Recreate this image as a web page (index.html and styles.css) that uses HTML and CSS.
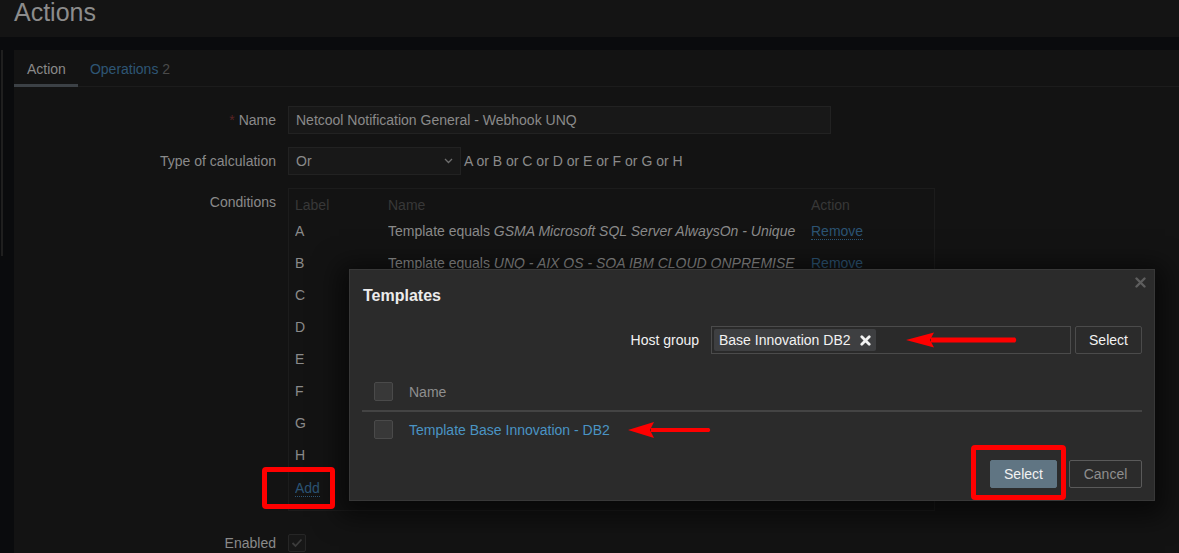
FILE: index.html
```html
<!DOCTYPE html>
<html>
<head>
<meta charset="utf-8">
<title>Actions</title>
<link rel="stylesheet" href="styles.css">
</head>
<body>
<div class="page">
  <header class="page-head"><h1 class="title">Actions</h1></header>
  <div class="band"></div>
  <div class="main">
    <aside class="gutter"><div class="gutter-line"></div></aside>
    <section class="panel">
      <nav class="tabs">
        <a class="tab active">Action</a>
        <a class="tab link">Operations <span class="count">2</span></a>
      </nav>
      <div class="form">
        <label class="f-label"><span class="req">*</span> Name</label>
        <div class="f-field"><div class="input name-input">Netcool Notification General - Webhook UNQ</div></div>

        <label class="f-label">Type of calculation</label>
        <div class="f-field inline">
          <div class="input select">Or
            <svg class="chev" width="9" height="6" viewBox="0 0 9 6"><path d="M1 1 L4.5 4.5 L8 1" fill="none" stroke="#6e6e6e" stroke-width="1.3"/></svg>
          </div>
          <span class="calc">A or B or C or D or E or F or G or H</span>
        </div>

        <label class="f-label">Conditions</label>
        <div class="f-field">
          <div class="cond-box">
            <table class="cond">
              <colgroup><col class="c-label"><col class="c-name"><col class="c-act"></colgroup>
              <thead><tr><th>Label</th><th>Name</th><th>Action</th></tr></thead>
              <tbody>
                <tr><td>A</td><td>Template equals <em>GSMA Microsoft SQL Server AlwaysOn - Unique</em></td><td><a class="dlink">Remove</a></td></tr>
                <tr><td>B</td><td>Template equals <em>UNQ - AIX OS - SOA IBM CLOUD ONPREMISE</em></td><td><a class="dlink">Remove</a></td></tr>
                <tr><td>C</td><td></td><td></td></tr>
                <tr><td>D</td><td></td><td></td></tr>
                <tr><td>E</td><td></td><td></td></tr>
                <tr><td>F</td><td></td><td></td></tr>
                <tr><td>G</td><td></td><td></td></tr>
                <tr><td>H</td><td></td><td></td></tr>
                <tr><td><a class="dlink">Add</a></td><td></td><td></td></tr>
              </tbody>
            </table>
          </div>
        </div>

        <label class="f-label enabled-label">Enabled</label>
        <div class="f-field enabled-field">
          <span class="chk-dim"><svg width="12" height="10" viewBox="0 0 12 10"><path d="M1.5 5 L4.5 8 L10.5 1.5" fill="none" stroke="#3c3c3c" stroke-width="1.8"/></svg></span>
        </div>
      </div>
    </section>
  </div>
</div>

<div class="modal">
  <div class="modal-head"><h2 class="modal-title">Templates</h2></div>
  <svg class="close" width="11" height="11" viewBox="0 0 11 11"><path d="M1.5 1.5 L9.5 9.5 M9.5 1.5 L1.5 9.5" stroke="#5e5e5e" stroke-width="2.4" stroke-linecap="round"/></svg>
  <div class="modal-body">
    <div class="hg-row">
      <span class="hg-label">Host group</span>
      <div class="multi">
        <span class="chip">Base Innovation DB2
          <svg class="chip-x" width="11" height="11" viewBox="0 0 11 11"><path d="M1.8 1.8 L9.2 9.2 M9.2 1.8 L1.8 9.2" stroke="#f2f2f2" stroke-width="2.8" stroke-linecap="round"/></svg>
        </span>
      </div>
      <button class="btn-alt">Select</button>
    </div>
    <table class="list">
      <thead><tr><th class="cb-cell"><span class="chk"></span></th><th>Name</th></tr></thead>
      <tbody><tr><td class="cb-cell"><span class="chk"></span></td><td><a class="link-blue">Template Base Innovation - DB2</a></td></tr></tbody>
    </table>
    <div class="modal-foot">
      <button class="btn-main">Select</button>
      <button class="btn-cancel">Cancel</button>
    </div>
  </div>
</div>

<div class="mark mark-add"></div>
<div class="mark mark-select"></div>
<svg class="arrow arrow-hg" width="114" height="18" viewBox="0 0 114 18"><path d="M26 6.5 L110 6.5 Q112.5 9 110 11.5 L26 11.5 Z" fill="#f00"/><path d="M1 9 L29 1.5 L25 9 L29 16.5 Z" fill="#f00"/></svg>
<svg class="arrow arrow-tpl" width="86" height="18" viewBox="0 0 86 18"><path d="M24 7 L82 7 Q84.5 9 82 11 L24 11 Z" fill="#f00"/><path d="M1 9 L27 1 L23 9 L27 17 Z" fill="#f00"/></svg>
</body>
</html>
```

FILE: styles.css
```css
* { box-sizing: border-box; }
html, body { margin: 0; }
body {
  width: 1179px;
  height: 553px;
  overflow: hidden;
  position: relative;
  background: #131313;
  font-family: "Liberation Sans", Arial, sans-serif;
  font-size: 14px;
  color: #8a8a8a;
}
.page { display: flex; flex-direction: column; height: 553px; }
.page-head { height: 37px; background: #141414; flex: none; }
.title {
  margin: 0;
  padding-left: 14px;
  font-size: 25px;
  font-weight: normal;
  line-height: 25px;
  color: #8c8c8c;
}
.band { height: 13px; background: #0a0b0d; flex: none; }
.main { flex: 1; display: flex; }
.gutter { width: 14px; flex: none; background: #0a0b0d; }
.gutter-line { margin-left: 1px; width: 2px; height: 206px; background: #1f1f1f; }
.panel { flex: 1; background: #131313; }

.tabs { display: flex; height: 37px; border-bottom: 1px solid #1c1c1c; }
.tab { display: block; height: 37px; line-height: 36px; padding: 1px 12px 0; }
.tab.active { padding-left: 13px; color: #8a8a8a; box-shadow: inset 0 -3px 0 #3c4146; }
.tab.link { color: #2e5675; }
.tab .count { color: #4a4a4a; }

.form {
  display: grid;
  grid-template-columns: 262px 1fr;
  column-gap: 12px;
  row-gap: 13px;
  padding-top: 19px;
}
.f-label { text-align: right; line-height: 28px; color: #8a8a8a; }
.req { color: #5a2424; }
.f-field { display: flex; align-items: flex-start; }
.f-field.inline { align-items: center; }
.input {
  height: 28px;
  line-height: 26px;
  padding: 0 7px;
  background: #181818;
  border: 1px solid #222222;
  color: #8a8a8a;
}
.name-input { width: 543px; }
.select { width: 173px; position: relative; display: flex; justify-content: space-between; align-items: center; padding-right: 7px; }
.chev { display: block; }
.calc { margin-left: 3px; color: #8a8a8a; }

.cond-box { width: 647px; border: 1px solid #1c1c1c; padding: 6px 6px 7px; }
.cond { border-collapse: collapse; table-layout: fixed; }
.c-label { width: 93px; }
.c-name { width: 423px; }
.c-act { width: 100px; }
.cond th { height: 20px; padding: 0; text-align: left; font-weight: normal; color: #383838; }
.cond td { height: 32px; padding: 0; color: #8a8a8a; white-space: nowrap; overflow: hidden; }
.cond tbody tr:last-child td { padding-top: 2px; }
.cond em { font-style: italic; }
.dlink { color: #2c5473; border-bottom: 1px dotted #2c5473; }

.enabled-label { line-height: 18px; margin-top: 10px; }
.enabled-field { margin-top: 10px; }
.chk-dim {
  width: 18px; height: 18px;
  border: 1px solid #262626;
  background: #171717;
  border-radius: 2px;
  display: flex; align-items: center; justify-content: center;
}

/* modal */
.modal {
  position: absolute;
  left: 349px; top: 269px;
  width: 806px; height: 232px;
  background: #2b2b2b;
  border: 1px solid #383838;
  box-shadow: 0 6px 24px 10px rgba(0, 0, 0, 0.55);
  color: #f2f2f2;
}
.modal-head { height: 52px; padding: 0 13px; display: flex; align-items: center; }
.modal-title { margin: 0; font-size: 16px; font-weight: bold; color: #ececec; }
.close { position: absolute; top: 7px; right: 8px; }
.modal-body { padding: 0 12px; }
.hg-row { margin-top: 4px; height: 28px; display: flex; justify-content: flex-end; align-items: center; }
.hg-label { margin-right: 12px; color: #f2f2f2; }
.multi {
  width: 360px; height: 28px;
  border: 1px solid #4b4b4b;
  background: #2a2a2a;
  padding: 2px;
  display: flex;
}
.chip {
  height: 22px;
  line-height: 22px;
  padding: 0 5px;
  background: #3e3f41;
  border-radius: 2px;
  color: #f2f2f2;
  display: flex; align-items: center;
}
.chip-x { margin-left: 9px; }
button { font-family: inherit; font-size: 14px; cursor: pointer; }
.btn-alt {
  margin-left: 4px;
  width: 67px; height: 28px;
  background: #2b2b2b;
  border: 1px solid #4b4b4b;
  border-radius: 2px;
  color: #f2f2f2;
  padding: 0;
}
.list { width: 100%; border-collapse: collapse; margin-top: 19px; }
.list th { height: 38px; padding: 0; text-align: left; font-weight: normal; color: #8f8f8f; border-bottom: 2px solid #444444; }
.list td { height: 36px; padding: 0; }
.cb-cell { width: 47px; padding-left: 12px !important; }
.chk {
  display: block;
  width: 19px; height: 19px;
  background: #383838;
  border: 1px solid #4a4a4a;
  border-radius: 2px;
}
.link-blue { color: #4a94c4; }
.modal-foot { margin-top: 13px; display: flex; justify-content: flex-end; gap: 12px; }
.btn-main {
  width: 67px; height: 28px;
  background: #607583;
  border: 1px solid #607583;
  border-radius: 2px;
  color: #f2f2f2;
  padding: 0;
}
.btn-cancel {
  width: 73px; height: 28px;
  background: transparent;
  border: 1px solid #5a5a5a;
  border-radius: 2px;
  color: #8e8e8e;
  padding: 0;
}

/* annotations */
.mark { position: absolute; border: 5px solid #f00; border-radius: 4px; }
.mark-add { left: 262px; top: 467px; width: 73px; height: 42px; }
.mark-select { left: 971px; top: 445px; width: 95px; height: 55px; }
.arrow { position: absolute; }
.arrow-hg { left: 905px; top: 331px; }
.arrow-tpl { left: 627px; top: 421px; }
```
